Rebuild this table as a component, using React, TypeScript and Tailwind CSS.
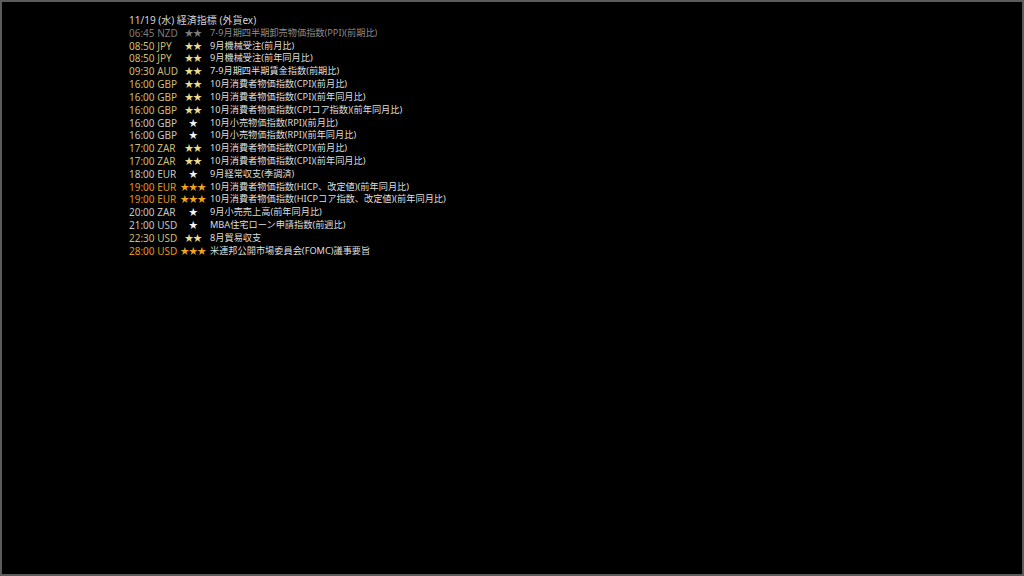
const rows: { t: string; s: number; d: string; past?: boolean }[] = [
  { t: "06:45 NZD", s: 2, d: "7-9月期四半期卸売物価指数(PPI)(前期比)", past: true },
  { t: "08:50 JPY", s: 2, d: "9月機械受注(前月比)" },
  { t: "08:50 JPY", s: 2, d: "9月機械受注(前年同月比)" },
  { t: "09:30 AUD", s: 2, d: "7-9月期四半期賃金指数(前期比)" },
  { t: "16:00 GBP", s: 2, d: "10月消費者物価指数(CPI)(前月比)" },
  { t: "16:00 GBP", s: 2, d: "10月消費者物価指数(CPI)(前年同月比)" },
  { t: "16:00 GBP", s: 2, d: "10月消費者物価指数(CPIコア指数)(前年同月比)" },
  { t: "16:00 GBP", s: 1, d: "10月小売物価指数(RPI)(前月比)" },
  { t: "16:00 GBP", s: 1, d: "10月小売物価指数(RPI)(前年同月比)" },
  { t: "17:00 ZAR", s: 2, d: "10月消費者物価指数(CPI)(前月比)" },
  { t: "17:00 ZAR", s: 2, d: "10月消費者物価指数(CPI)(前年同月比)" },
  { t: "18:00 EUR", s: 1, d: "9月経常収支(季調済)" },
  { t: "19:00 EUR", s: 3, d: "10月消費者物価指数(HICP、改定値)(前年同月比)" },
  { t: "19:00 EUR", s: 3, d: "10月消費者物価指数(HICPコア指数、改定値)(前年同月比)" },
  { t: "20:00 ZAR", s: 1, d: "9月小売売上高(前年同月比)" },
  { t: "21:00 USD", s: 1, d: "MBA住宅ローン申請指数(前週比)" },
  { t: "22:30 USD", s: 2, d: "8月貿易収支" },
  { t: "28:00 USD", s: 3, d: "米連邦公開市場委員会(FOMC)議事要旨" },
];

// colour per importance: time text / stars
const timeColor = (r: { s: number; past?: boolean }) =>
  r.past ? "text-[#7c7c7c]" : r.s === 3 ? "text-[#e0971c]" : r.s === 2 ? "text-[#cdbd72]" : "text-[#c4c4c4]";
const starColor = (r: { s: number; past?: boolean }) =>
  r.past ? "text-[#7c7c7c]" : r.s === 3 ? "text-[#f0a21e]" : r.s === 2 ? "text-[#eadc8c]" : "text-[#f4f4f4]";

export default function App() {
  return (
    <div
      className="h-[576px] w-[1024px] overflow-hidden border-2 border-[#5c5c5c] bg-black text-[10px] leading-[12.82px]"
      style={{ fontFamily: '"Noto Sans", "Noto Sans CJK JP", sans-serif' }}
    >
      <div className="pl-[127px] pt-[12px]">
        <div className="text-[#d4d4d4]">11/19 (水) 経済指標 (外貨ex)</div>
        {rows.map((r, i) => (
          <div key={i} className="flex items-center whitespace-nowrap">
            <span className={`w-[50px] ${timeColor(r)}`}>{r.t}</span>
            <span className={`w-[28px] text-center text-[9px] tracking-[-0.5px] ${starColor(r)}`}>
              {"★".repeat(r.s)}
            </span>
            <span className={`ml-[3px] text-[9.2px] ${r.past ? "text-[#8a8a8a]" : "text-[#dedede]"}`}>{r.d}</span>
          </div>
        ))}
      </div>
    </div>
  );
}
